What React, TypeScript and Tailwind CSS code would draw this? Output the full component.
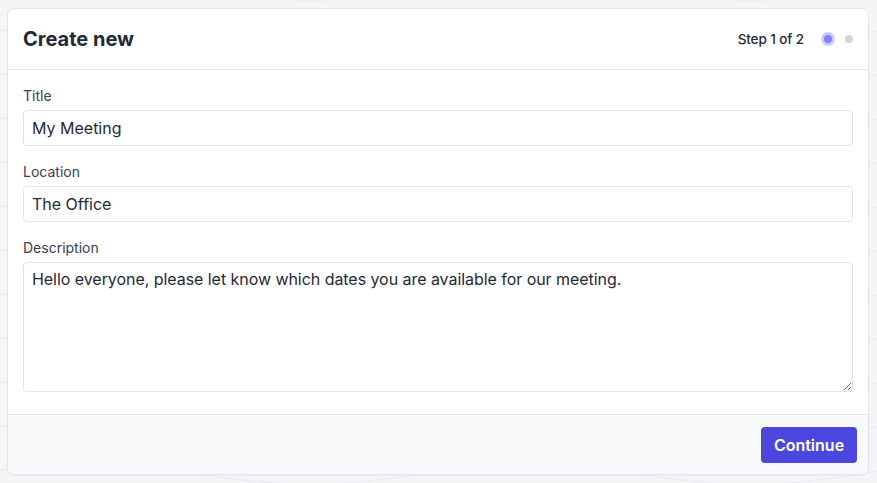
import React from "react";

function Background() {
  return (
    <svg className="absolute inset-0 h-full w-full" preserveAspectRatio="none" viewBox="0 0 877 483">
      <g fill="none" stroke="#e9eaee" strokeWidth="1.2">
        {Array.from({ length: 12 }).map((_, i) => (
          <path
            key={i}
            d={`M-20 ${i * 44 - 10} Q 90 ${i * 44 - 30} 200 ${i * 44 - 10} T 420 ${i * 44 - 10} T 640 ${i * 44 - 10} T 860 ${i * 44 - 10} T 1080 ${i * 44 - 10}`}
          />
        ))}
      </g>
    </svg>
  );
}

export default function App() {
  return (
    <div
      className="relative h-[483px] w-[877px] overflow-hidden bg-[#f4f5f7] text-[#1f2937]"
      style={{ fontFamily: "Inter, 'Noto Sans', sans-serif" }}
    >
      <Background />
      <div className="relative pl-[7px] pr-[8px] pt-[8px]">
        <div className="overflow-hidden rounded-[7px] border border-[#e3e5e9] bg-white shadow-[0_1px_2px_rgba(0,0,0,0.04)]">
          <div className="flex h-[61px] items-center justify-between border-b border-[#e5e7eb] pl-[15px] pr-[15px]">
            <h1 className="text-[20px] font-bold leading-7 text-[#1f2937]">Create new</h1>
            <div className="flex items-center">
              <span className="text-[13.5px] font-medium tracking-[-0.1px] text-[#1f2937]">Step 1 of 2</span>
              <div className="ml-[17px] flex h-[14px] w-[14px] items-center justify-center rounded-full bg-[#c9cbfc]">
                <div className="h-[8px] w-[8px] rounded-full bg-[#8183f4]" />
              </div>
              <div className="ml-[10px] h-[8px] w-[8px] rounded-full bg-[#d1d5db]" />
            </div>
          </div>
          <div className="flex flex-col gap-4 px-[15px] pb-[22px] pt-[16px]">
            <div>
              <label className="mb-1 block text-[14px] leading-5 text-[#374151]">Title</label>
              <input
                readOnly
                value="My Meeting"
                className="block h-[36px] w-full rounded-[4px] border border-[#e2e4e8] px-[8px] text-[16px] text-[#1f2937] outline-none"
                style={{ fontFamily: "Inter, sans-serif" }}
              />
            </div>
            <div>
              <label className="mb-1 block text-[14px] leading-5 text-[#374151]">Location</label>
              <input
                readOnly
                value="The Office"
                className="block h-[36px] w-full rounded-[4px] border border-[#e2e4e8] px-[8px] text-[16px] text-[#1f2937] outline-none"
                style={{ fontFamily: "Inter, sans-serif" }}
              />
            </div>
            <div>
              <label className="mb-1 block text-[14px] leading-5 text-[#374151]">Description</label>
              <textarea
                readOnly
                value="Hello everyone, please let know which dates you are available for our meeting."
                className="block h-[130px] w-full resize-y rounded-[4px] border border-[#e2e4e8] px-[8px] pb-[6px] pt-[4px] text-[16px] leading-6 tracking-[-0.05px] text-[#1f2937] outline-none"
                style={{ fontFamily: "Inter, sans-serif" }}
              />
            </div>
          </div>
          <div className="flex h-[60px] items-center justify-end border-t border-[#e5e7eb] bg-[#f8f9fb] pr-[11px]">
            <button className="h-[36px] w-[96px] rounded-[4px] bg-[#4b47de] text-[16px] font-semibold text-white">
              Continue
            </button>
          </div>
        </div>
      </div>
    </div>
  );
}
